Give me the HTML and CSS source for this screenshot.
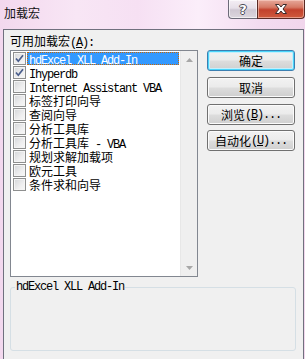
FILE: index.html
```html
<!DOCTYPE html>
<html lang="zh-CN">
<head>
<meta charset="utf-8">
<title>加载宏</title>
<link rel="stylesheet" href="styles.css">
</head>
<body>
<div class="window">
  <div class="titlebar">
    <span class="title">加载宏</span>
    <div class="caption-buttons">
      <div class="cap help"><span class="help-glyph">?</span></div>
      <div class="cap close">
        <svg width="16" height="12" viewBox="0 0 16 12"><path d="M2.5 1.5 H6 L8 4 L10 1.5 H13.5 L10 6 L13.5 10.5 H10 L8 8 L6 10.5 H2.5 L6 6 Z" fill="#fff" stroke="#3a2a2a" stroke-width="1" stroke-linejoin="round"/></svg>
      </div>
    </div>
  </div>
  <div class="client">
    <div class="main">
      <div class="left">
        <div class="label">可用加载宏<span class="en">(<u>A</u>):</span></div>
        <div class="listbox">
          <ul class="items">
            <li class="item"><span class="cb checked"><svg width="11" height="11" viewBox="0 0 11 11"><path d="M2 5.5 L4.3 8.2 L9 2.2" fill="none" stroke="#4a5e8c" stroke-width="1.7"/></svg></span><span class="text selected"><span class="en">hdExcel XLL Add-In</span></span></li>
            <li class="item"><span class="cb checked"><svg width="11" height="11" viewBox="0 0 11 11"><path d="M2 5.5 L4.3 8.2 L9 2.2" fill="none" stroke="#4a5e8c" stroke-width="1.7"/></svg></span><span class="text"><span class="en">Ihyperdb</span></span></li>
            <li class="item"><span class="cb"></span><span class="text"><span class="en">Internet Assistant VBA</span></span></li>
            <li class="item"><span class="cb"></span><span class="text">标签打印向导</span></li>
            <li class="item"><span class="cb"></span><span class="text">查阅向导</span></li>
            <li class="item"><span class="cb"></span><span class="text">分析工具库</span></li>
            <li class="item"><span class="cb"></span><span class="text">分析工具库<span class="en"> - VBA</span></span></li>
            <li class="item"><span class="cb"></span><span class="text">规划求解加载项</span></li>
            <li class="item"><span class="cb"></span><span class="text">欧元工具</span></li>
            <li class="item"><span class="cb"></span><span class="text">条件求和向导</span></li>
          </ul>
          <div class="scrollbar">
            <div class="arrow-box"><svg width="7" height="4" viewBox="0 0 7 4"><polygon points="3.5,0 7,4 0,4" fill="#a7a7a7"/></svg></div>
            <div class="arrow-box"><svg width="7" height="4" viewBox="0 0 7 4"><polygon points="0,0 7,0 3.5,4" fill="#a7a7a7"/></svg></div>
          </div>
        </div>
      </div>
      <div class="buttons">
        <div class="btn default b-ok">确定</div>
        <div class="btn b-cancel">取消</div>
        <div class="btn b-browse">浏览<span class="en">(<u>B</u>)...</span></div>
        <div class="btn b-auto">自动化<span class="en">(<u>U</u>)...</span></div>
      </div>
    </div>
    <fieldset class="desc">
      <legend class="en">hdExcel XLL Add-In</legend>
    </fieldset>
  </div>
</div>
</body>
</html>
```

FILE: styles.css
```css
* { box-sizing: border-box; }
html, body {
  margin: 0;
  padding: 0;
}
body {
  width: 305px;
  height: 359px;
  overflow: hidden;
  background: #f2d6ed;
  font-family: "Noto Sans CJK SC", sans-serif;
  font-size: 12px;
  color: #000;
}
.window {
  width: 305px;
  height: 359px;
  display: flex;
  flex-direction: column;
  background: linear-gradient(90deg, #f3d8ee 0%, #f8e6f5 25%, #f6e0f3 45%, #fbeefa 65%, #f3dcf0 85%, #f1d6ec 100%);
}
.titlebar {
  height: 29px;
  display: flex;
  align-items: flex-start;
}
.title {
  padding: 5px 0 0 4px;
  line-height: 16px;
  font-size: 12px;
  color: #111;
}
.caption-buttons {
  margin-left: auto;
  display: flex;
}
.cap {
  height: 19px;
  display: flex;
  align-items: center;
  justify-content: center;
}
.help {
  width: 29px;
  border: 1px solid #6c6a78;
  border-top: none;
  border-right: none;
  border-bottom-left-radius: 4px;
  background: linear-gradient(#f4eef4 0%, #e6dfe8 45%, #cfc7d2 55%, #dcd6de 100%);
  box-shadow: inset 0 0 0 1px rgba(255,255,255,0.6);
}
.help-glyph {
  font-family: "DejaVu Sans", sans-serif;
  font-weight: bold;
  font-size: 13px;
  line-height: 13px;
  color: #fff;
  text-shadow: -1px 0 #4a4a55, 1px 0 #4a4a55, 0 -1px #4a4a55, 0 1px #4a4a55;
}
.close {
  width: 48px;
  border: 1px solid #5a2a25;
  border-top: none;
  border-bottom-right-radius: 4px;
  background: linear-gradient(#e6a89a 0%, #d67a66 40%, #c2412c 55%, #cf5a3d 100%);
  box-shadow: inset 0 0 0 1px rgba(255,220,210,0.5);
}
.client {
  flex: 1;
  margin: 0 1px 0 3px;
  border: 1px solid #70707e;
  border-bottom: none;
  background: #f0f0f0;
  display: flex;
  flex-direction: column;
}
.en {
  font-family: "Liberation Mono", monospace;
  font-size: 12px;
  letter-spacing: -1.2px;
}
.main {
  display: flex;
  padding: 0 0 0 6px;
}
.left {
  width: 188px;
  display: flex;
  flex-direction: column;
}
.label {
  margin-top: 4px;
  line-height: 14px;
  height: 14px;
  margin-bottom: 2px;
  white-space: nowrap;
}
.listbox {
  height: 227px;
  border: 1px solid #828790;
  background: #fff;
  display: flex;
}
.items {
  list-style: none;
  margin: 0;
  padding: 0;
  flex: 1;
}
.item {
  height: 14px;
  padding-top: 1px;
  display: flex;
  align-items: flex-start;
}
.cb {
  width: 13px;
  height: 13px;
  margin-left: 2px;
  border: 1px solid #8e8f8f;
  background: linear-gradient(135deg, #d4d6d9 0%, #eeeeef 60%, #f8f8f8 100%);
  box-shadow: inset 0 0 0 1px #f4f4f4;
  flex: none;
}
.cb svg { display: block; }
.text {
  margin-left: 1px;
  margin-right: 1px;
  padding-left: 2px;
  flex: 1;
  height: 13px;
  line-height: 13px;
  white-space: nowrap;
}
.text.selected {
  background: #3399ff;
  color: #fff;
  outline: 1px dotted #cc6600;
  outline-offset: -1px;
}
.scrollbar {
  width: 17px;
  flex: none;
  background: #efefef;
  border-left: 1px solid #e7e7e7;
  display: flex;
  flex-direction: column;
  justify-content: space-between;
}
.arrow-box {
  height: 17px;
  display: flex;
  align-items: center;
  justify-content: center;
}
.arrow-box svg { display: block; }
.buttons {
  margin-left: 9px;
  padding-top: 20px;
  display: flex;
  flex-direction: column;
}
.btn {
  width: 88px;
  height: 21px;
  border: 1px solid #707070;
  border-radius: 3px;
  background: linear-gradient(#f2f2f2 0%, #ebebeb 48%, #dddddd 52%, #cfcfcf 100%);
  box-shadow: inset 0 0 0 1px #fbfbfb;
  display: flex;
  align-items: center;
  justify-content: center;
  line-height: 14px;
  white-space: nowrap;
}
.btn.default {
  border-color: #3c7fb1;
  box-shadow: inset 0 0 0 1px #4ad4fa, inset 0 0 0 2px #c4effc;
}
.b-cancel { margin-top: 6px; }
.b-browse { margin-top: 6px; }
.b-auto { margin-top: 5px; }
.desc {
  margin: 4px 0 0 6px;
  width: 286px;
  height: 70px;
  padding: 0;
  border: 1px solid #d5dfe5;
  border-radius: 3px;
  min-width: 0;
}
.desc legend {
  margin-left: 4px;
  padding: 0 1px;
  line-height: 13px;
}
```
